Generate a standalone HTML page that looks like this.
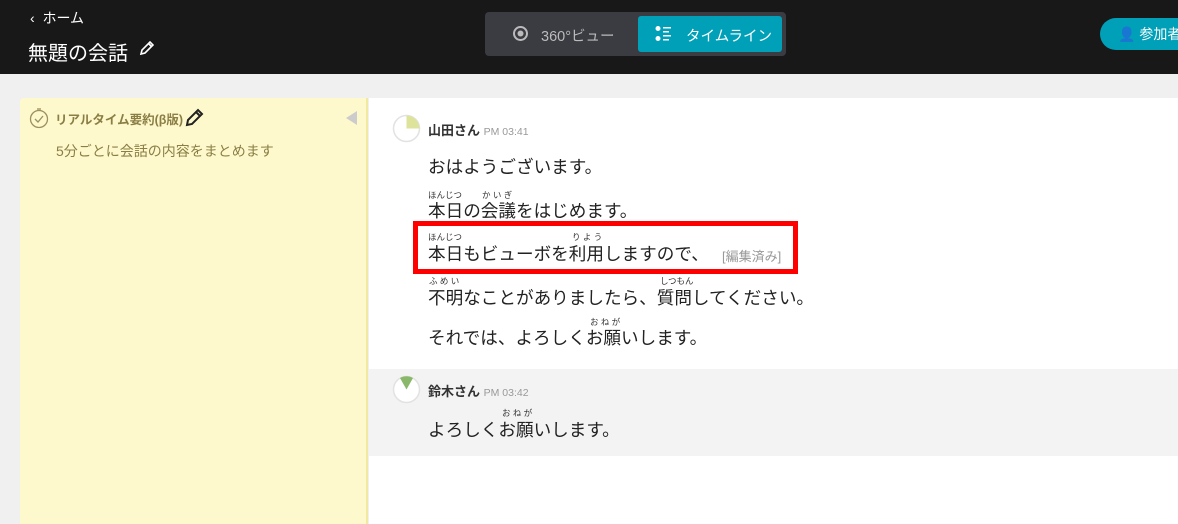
<!DOCTYPE html>
<html><head><meta charset="utf-8"><style>
*{margin:0;padding:0;box-sizing:border-box}
body{width:1178px;height:524px;overflow:hidden;background:#f0f0f0;font-family:"Liberation Sans","Noto Sans CJK JP",sans-serif;position:relative}
.a{position:absolute;white-space:nowrap}
.hdr{position:absolute;left:0;top:0;width:1178px;height:74px;background:#181818}
.t{font-size:17.6px;color:#222;line-height:1}
.r{font-size:8.5px;color:#333;line-height:1}
</style></head><body>
<div class="hdr"></div>
<div class="a" style="left:30px;top:8px;color:#fff;font-size:14px">‹&nbsp; ホーム</div>
<div class="a" style="left:28px;top:37px;color:#fff;font-size:20px">無題の会話</div>
<svg class="a" style="left:139px;top:41px" width="15" height="15" viewBox="0 0 15 15"><path d="M2 13 L3 9 L11 1 L14 4 L6 12 Z M9.5 2.5 L12.5 5.5" fill="none" stroke="#fff" stroke-width="1.6"/></svg>
<div class="a" style="left:485px;top:12px;width:301px;height:44px;background:#3b3b42;border-radius:4px"></div>
<svg class="a" style="left:512px;top:25px" width="17" height="17" viewBox="0 0 17 17"><circle cx="8.5" cy="8.5" r="6.5" fill="none" stroke="#bbb" stroke-width="2"/><circle cx="8.5" cy="8.5" r="3" fill="#bbb"/></svg>
<div class="a" style="left:541px;top:25px;color:#bbb;font-size:14.5px">360°ビュー</div>
<div class="a" style="left:638px;top:16px;width:144px;height:36px;background:#00a0b8;border-radius:3px"></div>
<svg class="a" style="left:655px;top:25px" width="18" height="18" viewBox="0 0 18 18" fill="#fff"><circle cx="3" cy="3.5" r="2.5"/><circle cx="3" cy="13.5" r="2.5"/><rect x="8" y="2" width="8" height="1.5"/><rect x="8" y="6" width="6" height="1.5"/><rect x="8" y="10" width="8" height="1.5"/><rect x="8" y="14" width="6" height="1.5"/></svg>
<div class="a" style="left:686px;top:25px;color:#fff;font-size:14.5px">タイムライン</div>
<div class="a" style="left:1100px;top:18px;width:100px;height:32px;background:#00a0b8;border-radius:16px"></div>
<div class="a" style="left:1118px;top:24px;color:#fff;font-size:14px">👤&nbsp;参加者</div>
<div class="a" style="left:20px;top:98px;width:348px;height:426px;background:#fef9cc;border-right:2px solid #f1e9a0;border-radius:4px 0 0 0"></div>
<svg class="a" style="left:29px;top:107px" width="20" height="22" viewBox="0 0 20 22"><circle cx="10" cy="12" r="8.5" fill="none" stroke="#9a9060" stroke-width="1.3"/><path d="M6 12 L9 15 L14 9" fill="none" stroke="#9a9060" stroke-width="1.3"/><path d="M8 2 L12 2" stroke="#9a9060" stroke-width="1.3"/></svg>
<div class="a" style="left:55px;top:109px;color:#8a7e45;font-size:12.5px;font-weight:bold">リアルタイム要約(β版)</div>
<svg class="a" style="left:185px;top:108px" width="19" height="19" viewBox="0 0 19 19"><path d="M2 17 L3 12 L13 2 L17 6 L7 16 Z M11 4 L15 8" fill="none" stroke="#222" stroke-width="2"/></svg>
<div class="a" style="left:346px;top:111px;width:0;height:0;border-top:7px solid transparent;border-bottom:7px solid transparent;border-right:11px solid #ccc"></div>
<div class="a" style="left:56px;top:141px;color:#8a7e45;font-size:14px">5分ごとに会話の内容をまとめます</div>
<div class="a" style="left:369px;top:98px;width:809px;height:271px;background:#fff"></div>
<div class="a" style="left:369px;top:369px;width:809px;height:87px;background:#f3f3f3"></div>
<div class="a" style="left:369px;top:456px;width:809px;height:68px;background:#fff"></div>
<svg class="a" style="left:392px;top:114px" width="29" height="29" viewBox="0 0 29 29"><circle cx="14.5" cy="14.5" r="13" fill="#fff" stroke="#e2e2e2" stroke-width="1.5"/><path d="M14.5 14.5 L14.5 1.5 A13 13 0 0 1 27.5 14.5 Z" fill="#dde39a"/></svg>
<div class="a" style="left:428px;top:120px;font-size:13px;font-weight:bold;color:#333">山田さん <span style="font-weight:normal;font-size:10.5px;color:#999">PM 03:41</span></div>
<div class="a t" style="left:428px;top:159px">おはようございます。</div>
<div class="a r" style="left:428px;top:191px">ほんじつ</div><div class="a r" style="left:482px;top:191px">か い ぎ</div>
<div class="a t" style="left:428px;top:203px">本日の会議をはじめます。</div>
<div class="a" style="left:413px;top:221px;width:385px;height:53px;border:5px solid #f00"></div>
<div class="a r" style="left:428px;top:233px">ほんじつ</div><div class="a r" style="left:572px;top:233px">り よ う</div>
<div class="a t" style="left:428px;top:246px">本日もビューボを利用しますので、</div>
<div class="a" style="left:722px;top:246px;font-size:13px;color:#999">[編集済み]</div>
<div class="a r" style="left:429px;top:277px">ふ め い</div><div class="a r" style="left:660px;top:277px">しつもん</div>
<div class="a t" style="left:428px;top:290px">不明なことがありましたら、質問してください。</div>
<div class="a r" style="left:590px;top:318px">お ね が</div>
<div class="a t" style="left:428px;top:330px">それでは、よろしくお願いします。</div>
<svg class="a" style="left:392px;top:375px" width="29" height="29" viewBox="0 0 29 29"><circle cx="14.5" cy="14.5" r="13" fill="#fff" stroke="#e2e2e2" stroke-width="1.5"/><path d="M14.5 14.5 L8 3 A13 13 0 0 1 21 3 Z" fill="#8ab86a"/></svg>
<div class="a" style="left:428px;top:381px;font-size:13px;font-weight:bold;color:#333">鈴木さん <span style="font-weight:normal;font-size:10.5px;color:#999">PM 03:42</span></div>
<div class="a r" style="left:502px;top:409px">お ね が</div>
<div class="a t" style="left:428px;top:422px">よろしくお願いします。</div>
</body></html>
